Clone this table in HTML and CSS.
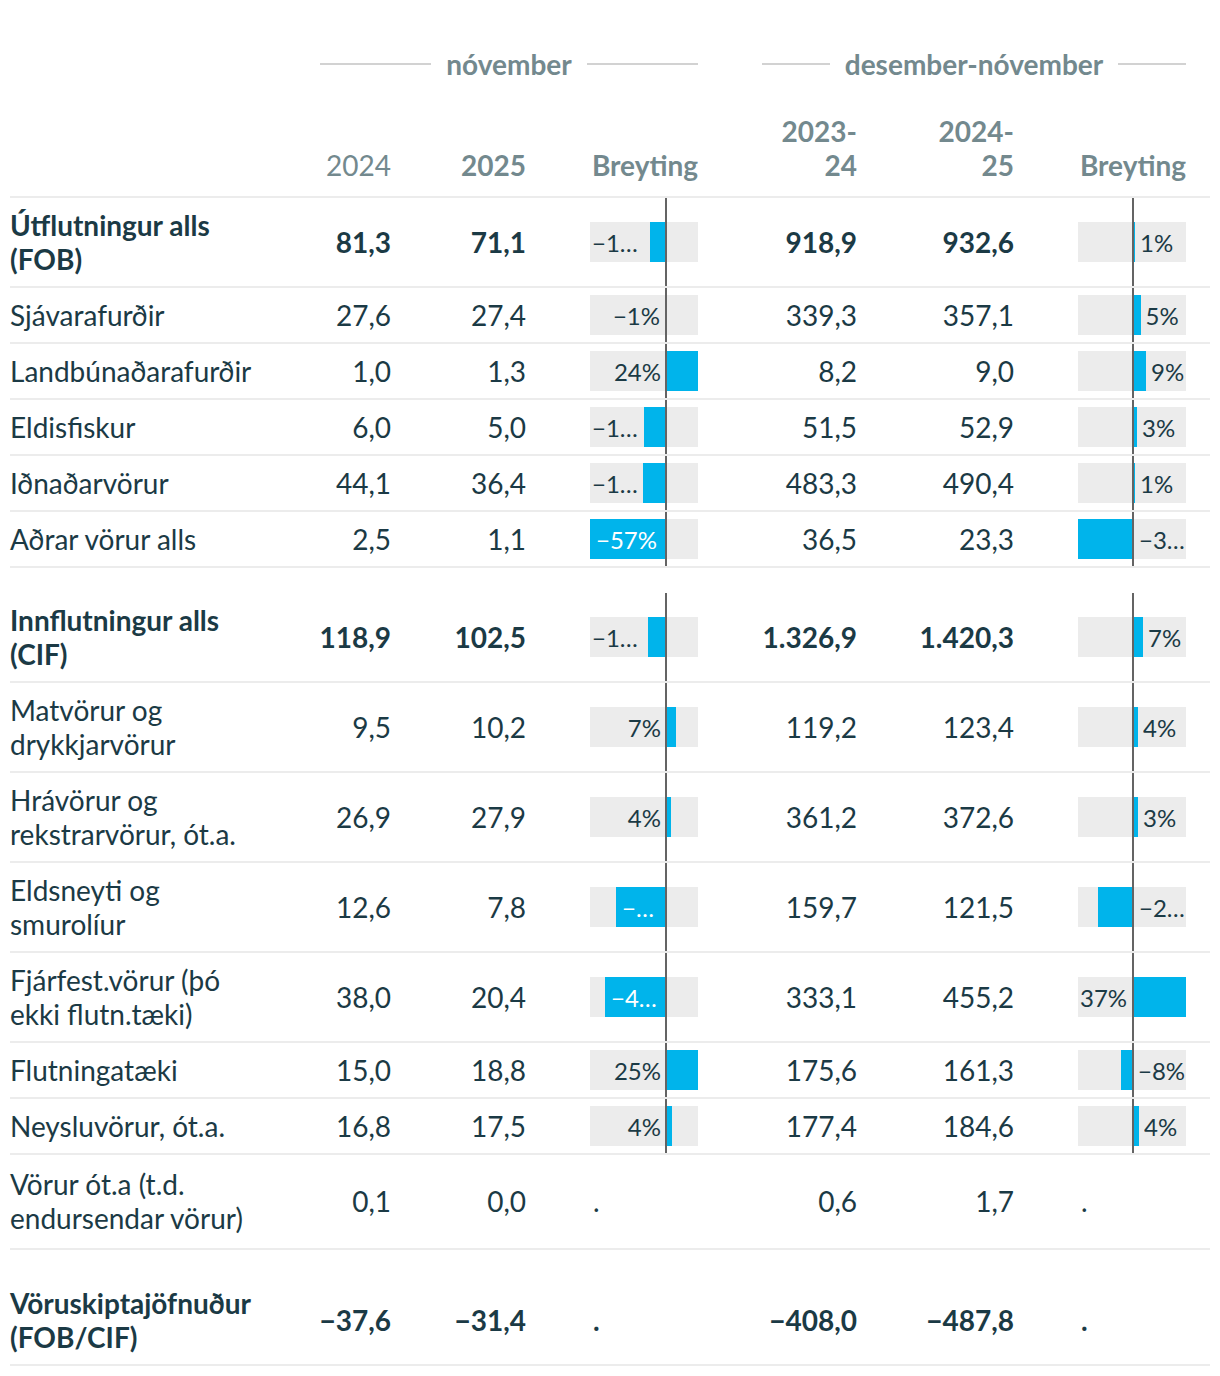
FILE: index.html
```html
<!DOCTYPE html>
<html lang="is">
<head>
<meta charset="utf-8">
<title>Vöruviðskipti</title>
<link rel="stylesheet" href="styles.css">
</head>
<body>
<div class="table">
  <div class="row head-a">
    <div></div>
    <div class="span span-a">nóvember</div>
    <div class="span span-b">desember-nóvember</div>
  </div>
  <div class="row head-b">
    <div></div>
    <div class="num light">2024</div>
    <div class="num">2025</div>
    <div class="num">Breyting</div>
    <div class="num">2023-<br>24</div>
    <div class="num">2024-<br>25</div>
    <div class="num">Breyting</div>
  </div>

  <div class="row data bold">
    <div class="lbl">Útflutningur alls (FOB)</div>
    <div class="num">81,3</div>
    <div class="num">71,1</div>
    <div class="bar ba"><div class="track"><div class="fill" style="left:59.5px;width:16.5px"></div><span class="bl" style="left:2px;right:53.5px">−13%</span></div><i class="axis"></i></div>
    <div class="num">918,9</div>
    <div class="num">932,6</div>
    <div class="bar bb"><div class="track"><div class="fill" style="left:55px;width:2.2px"></div><span class="bl la" style="left:62px;right:0">1%</span></div><i class="axis"></i></div>
  </div>
  <div class="row data">
    <div class="lbl">Sjávarafurðir</div>
    <div class="num">27,6</div>
    <div class="num">27,4</div>
    <div class="bar ba"><div class="track"><div class="fill" style="left:75px;width:1px"></div><span class="bl" style="left:2px;right:38px">−1%</span></div><i class="axis"></i></div>
    <div class="num">339,3</div>
    <div class="num">357,1</div>
    <div class="bar bb"><div class="track"><div class="fill" style="left:55px;width:7.6px"></div><span class="bl la" style="left:67.6px;right:0">5%</span></div><i class="axis"></i></div>
  </div>
  <div class="row data">
    <div class="lbl">Landbúnaðarafurðir</div>
    <div class="num">1,0</div>
    <div class="num">1,3</div>
    <div class="bar ba"><div class="track"><div class="fill" style="left:76px;width:32px"></div><span class="bl" style="left:2px;right:37px">24%</span></div><i class="axis"></i></div>
    <div class="num">8,2</div>
    <div class="num">9,0</div>
    <div class="bar bb"><div class="track"><div class="fill" style="left:55px;width:13px"></div><span class="bl la" style="left:73px;right:0">9%</span></div><i class="axis"></i></div>
  </div>
  <div class="row data">
    <div class="lbl">Eldisfiskur</div>
    <div class="num">6,0</div>
    <div class="num">5,0</div>
    <div class="bar ba"><div class="track"><div class="fill" style="left:54px;width:22px"></div><span class="bl" style="left:2px;right:59px">−17%</span></div><i class="axis"></i></div>
    <div class="num">51,5</div>
    <div class="num">52,9</div>
    <div class="bar bb"><div class="track"><div class="fill" style="left:55px;width:4px"></div><span class="bl la" style="left:64px;right:0">3%</span></div><i class="axis"></i></div>
  </div>
  <div class="row data">
    <div class="lbl">Iðnaðarvörur</div>
    <div class="num">44,1</div>
    <div class="num">36,4</div>
    <div class="bar ba"><div class="track"><div class="fill" style="left:53px;width:23px"></div><span class="bl" style="left:2px;right:60px">−17%</span></div><i class="axis"></i></div>
    <div class="num">483,3</div>
    <div class="num">490,4</div>
    <div class="bar bb"><div class="track"><div class="fill" style="left:55px;width:2.2px"></div><span class="bl la" style="left:62px;right:0">1%</span></div><i class="axis"></i></div>
  </div>
  <div class="row data">
    <div class="lbl">Aðrar vörur alls</div>
    <div class="num">2,5</div>
    <div class="num">1,1</div>
    <div class="bar ba"><div class="track"><div class="fill" style="left:0;width:76px"></div><span class="bl in" style="left:4px;right:41px">−57%</span></div><i class="axis"></i></div>
    <div class="num">36,5</div>
    <div class="num">23,3</div>
    <div class="bar bb"><div class="track"><div class="fill" style="left:0;width:55px"></div><span class="bl la" style="left:61px;right:0">−36%</span></div><i class="axis"></i></div>
  </div>

  <div class="row data bold group">
    <div class="lbl">Innflutningur alls (CIF)</div>
    <div class="num">118,9</div>
    <div class="num">102,5</div>
    <div class="bar ba"><div class="track"><div class="fill" style="left:58px;width:18px"></div><span class="bl" style="left:2px;right:55px">−14%</span></div><i class="axis"></i></div>
    <div class="num">1.326,9</div>
    <div class="num">1.420,3</div>
    <div class="bar bb"><div class="track"><div class="fill" style="left:55px;width:10.3px"></div><span class="bl la" style="left:70px;right:0">7%</span></div><i class="axis"></i></div>
  </div>
  <div class="row data">
    <div class="lbl">Matvörur og drykkjarvörur</div>
    <div class="num">9,5</div>
    <div class="num">10,2</div>
    <div class="bar ba"><div class="track"><div class="fill" style="left:76px;width:9.7px"></div><span class="bl" style="left:2px;right:37px">7%</span></div><i class="axis"></i></div>
    <div class="num">119,2</div>
    <div class="num">123,4</div>
    <div class="bar bb"><div class="track"><div class="fill" style="left:55px;width:5.1px"></div><span class="bl la" style="left:65px;right:0">4%</span></div><i class="axis"></i></div>
  </div>
  <div class="row data">
    <div class="lbl">Hrávörur og rekstrarvörur, ót.a.</div>
    <div class="num">26,9</div>
    <div class="num">27,9</div>
    <div class="bar ba"><div class="track"><div class="fill" style="left:76px;width:5px"></div><span class="bl" style="left:2px;right:37px">4%</span></div><i class="axis"></i></div>
    <div class="num">361,2</div>
    <div class="num">372,6</div>
    <div class="bar bb"><div class="track"><div class="fill" style="left:55px;width:4.7px"></div><span class="bl la" style="left:65px;right:0">3%</span></div><i class="axis"></i></div>
  </div>
  <div class="row data">
    <div class="lbl">Eldsneyti og smurolíur</div>
    <div class="num">12,6</div>
    <div class="num">7,8</div>
    <div class="bar ba"><div class="track"><div class="fill" style="left:26px;width:50px"></div><span class="bl in" style="left:32px;right:41px">−38%</span></div><i class="axis"></i></div>
    <div class="num">159,7</div>
    <div class="num">121,5</div>
    <div class="bar bb"><div class="track"><div class="fill" style="left:20px;width:35px"></div><span class="bl la" style="left:61px;right:0">−24%</span></div><i class="axis"></i></div>
  </div>
  <div class="row data">
    <div class="lbl">Fjárfest.vörur (þó ekki flutn.tæki)</div>
    <div class="num">38,0</div>
    <div class="num">20,4</div>
    <div class="bar ba"><div class="track"><div class="fill" style="left:15px;width:61px"></div><span class="bl in" style="left:21px;right:41px">−46%</span></div><i class="axis"></i></div>
    <div class="num">333,1</div>
    <div class="num">455,2</div>
    <div class="bar bb"><div class="track"><div class="fill" style="left:55px;width:53px"></div><span class="bl la" style="left:2px;right:55px">37%</span></div><i class="axis"></i></div>
  </div>
  <div class="row data">
    <div class="lbl">Flutningatæki</div>
    <div class="num">15,0</div>
    <div class="num">18,8</div>
    <div class="bar ba"><div class="track"><div class="fill" style="left:76px;width:32px"></div><span class="bl" style="left:2px;right:37px">25%</span></div><i class="axis"></i></div>
    <div class="num">175,6</div>
    <div class="num">161,3</div>
    <div class="bar bb"><div class="track"><div class="fill" style="left:43px;width:12px"></div><span class="bl la" style="left:60px;right:0">−8%</span></div><i class="axis"></i></div>
  </div>
  <div class="row data">
    <div class="lbl">Neysluvörur, ót.a.</div>
    <div class="num">16,8</div>
    <div class="num">17,5</div>
    <div class="bar ba"><div class="track"><div class="fill" style="left:76px;width:5.5px"></div><span class="bl" style="left:2px;right:37px">4%</span></div><i class="axis"></i></div>
    <div class="num">177,4</div>
    <div class="num">184,6</div>
    <div class="bar bb"><div class="track"><div class="fill" style="left:55px;width:6px"></div><span class="bl la" style="left:66px;right:0">4%</span></div><i class="axis"></i></div>
  </div>
  <div class="row data tall">
    <div class="lbl">Vörur ót.a (t.d. endursendar vörur)</div>
    <div class="num">0,1</div>
    <div class="num">0,0</div>
    <div class="dot">.</div>
    <div class="num">0,6</div>
    <div class="num">1,7</div>
    <div class="dot">.</div>
  </div>

  <div class="row data bold group last">
    <div class="lbl">Vöruskiptajöfnuður (FOB/CIF)</div>
    <div class="num">−37,6</div>
    <div class="num">−31,4</div>
    <div class="dot">.</div>
    <div class="num">−408,0</div>
    <div class="num">−487,8</div>
    <div class="dot">.</div>
  </div>
</div>
</body>
</html>
```

FILE: styles.css
```css
* { box-sizing: border-box; }

body {
  margin: 0;
  background: #ffffff;
  font-family: Lato, "Noto Sans", sans-serif;
  color: #1b3a45;
}

.table {
  padding: 47px 10px 0 10px;
  width: 1220px;
}

.row {
  display: grid;
  grid-template-columns: 246px 71px 71px 108px 95px 93px 108px;
  column-gap: 64px;
  padding-right: 24px;
  font-size: 28px;
  line-height: 34px;
}

.head-a {
  height: 34px;
  font-weight: 700;
  color: #73898e;
}

.span {
  grid-column: 2 / 5;
  display: flex;
  align-items: center;
  gap: 15px;
  white-space: nowrap;
}

.span-b {
  grid-column: 5 / 8;
}

.span::before,
.span::after {
  content: "";
  flex: 1;
  height: 2px;
  background: #d2d2d2;
}

.head-b {
  padding-top: 33px;
  padding-bottom: 14px;
  border-bottom: 2px solid #ececec;
  font-weight: 700;
  color: #73898e;
  align-items: end;
}

.light { font-weight: 400; }

.num { text-align: right; }

.data {
  border-bottom: 2px solid #ececec;
}

.data > div {
  padding: 10px 0;
  display: flex;
  align-items: center;
}

.data > .num {
  justify-content: flex-end;
}

.bold { font-weight: 700; }

.group { margin-top: 25px; }
.group.last { margin-top: 26px; }

.tall > div {
  padding: 12px 0 13px;
}

.data > .dot {
  padding-left: 3px;
}

.data > .bar {
  padding: 0;
  position: relative;
}

.track {
  position: relative;
  width: 100%;
  height: 40px;
  background: #ececec;
}

.fill {
  position: absolute;
  top: 0;
  bottom: 0;
  background: #00b4eb;
}

.bl {
  position: absolute;
  top: 0;
  bottom: 0;
  line-height: 42px;
  font-size: 24px;
  font-weight: 400;
  color: #1b3a45;
  white-space: nowrap;
  overflow: hidden;
  text-overflow: ellipsis;
  text-align: right;
}

.bl.la { text-align: left; }
.bl.in { color: #ffffff; }

.axis {
  position: absolute;
  top: 0;
  bottom: 0;
  width: 2px;
  background: #646464;
}

.ba .axis { left: 75px; }
.bb .axis { left: 54px; }
```
